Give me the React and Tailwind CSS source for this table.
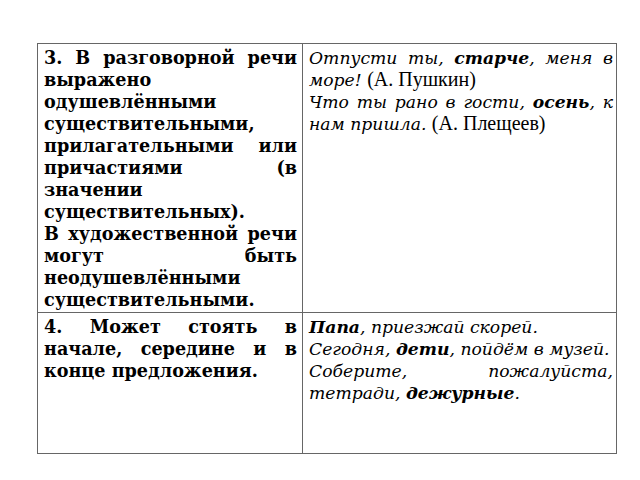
import React from "react";

const serif = { fontFamily: '"DejaVu Serif", serif' };

const Quote = ({ children }) => (
  <span className="not-italic font-['Liberation_Serif',serif] text-[20px] leading-[20px]">{children}</span>
);

export default function App() {
  return (
    <div className="w-[640px] h-[480px] bg-white pt-[43px] pl-[37px]">
      <table className="border-collapse w-[580px] table-fixed text-black" style={serif}>
        <tbody>
          <tr className="h-[269px] align-top">
            <td className="w-[265px] border border-[#666] pl-[6px] pr-[5px] pt-[3px] text-[17.6px] leading-[22px] font-bold text-justify">
              <p>
                3. В разговорной речи выражено одушевлёнными существительными,
                прилагательными или причастиями (в значении существительных).
              </p>
              <p>
                В художественной речи могут быть неодушевлёнными существительными.
              </p>
            </td>
            <td className="border border-[#666] pl-[6px] pr-[3px] pt-[3px] text-[17.2px] leading-[22px] italic text-justify">
              <p>
                Отпусти ты, <b>старче</b>, меня в море! <Quote>(А. Пушкин)</Quote>
              </p>
              <p>
                Что ты рано в гости, <b>осень</b>, к нам пришла.{" "}
                <Quote>(А. Плещеев)</Quote>
              </p>
            </td>
          </tr>
          <tr className="h-[141px] align-top">
            <td className="border border-[#666] pl-[6px] pr-[5px] pt-[3px] text-[17.6px] leading-[22px] font-bold text-justify">
              <p>4. Может стоять в начале, середине и в конце предложения.</p>
            </td>
            <td className="border border-[#666] pl-[6px] pr-[3px] pt-[3px] text-[17.2px] leading-[22px] italic text-justify">
              <p><b>Папа</b>, приезжай скорей.</p>
              <p>Сегодня, <b>дети</b>, пойдём в музей.</p>
              <p>Соберите, пожалуйста, тетради, <b>дежурные</b>.</p>
            </td>
          </tr>
        </tbody>
      </table>
    </div>
  );
}
